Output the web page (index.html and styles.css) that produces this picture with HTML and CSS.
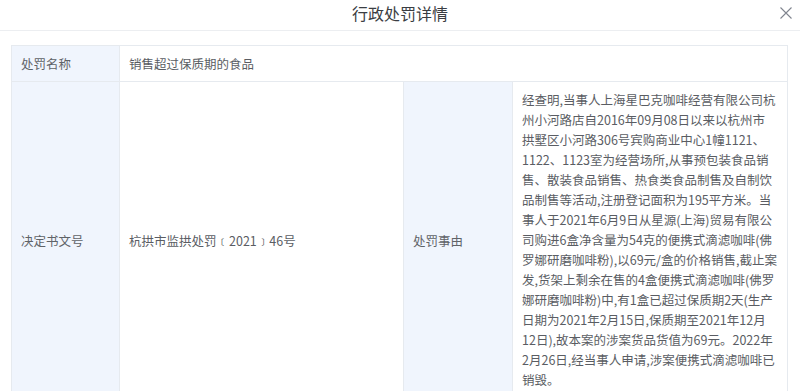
FILE: index.html
```html
<!DOCTYPE html>
<html lang="zh-CN">
<head>
<meta charset="utf-8">
<title>行政处罚详情</title>
<link rel="stylesheet" href="styles.css">
</head>
<body>
<div class="dialog">
  <div class="dialog-header">
    <span class="dialog-title">行政处罚详情</span>
    <span class="dialog-close" aria-label="关闭">
      <svg width="12" height="12" viewBox="0 0 12 12"><path d="M0.5 0.5L11.5 11.5M11.5 0.5L0.5 11.5" stroke="#80858f" stroke-width="1.1" fill="none"/></svg>
    </span>
  </div>
  <div class="dialog-body">
    <table class="detail">
      <colgroup>
        <col class="c-label"><col class="c-value"><col class="c-label2"><col class="c-value2">
      </colgroup>
      <tr class="row-short">
        <td class="label">处罚名称</td>
        <td class="value" colspan="3">销售超过保质期的食品</td>
      </tr>
      <tr>
        <td class="label">决定书文号</td>
        <td class="value">杭拱市监拱处罚﹝2021﹞46号</td>
        <td class="label">处罚事由</td>
        <td class="value long">经查明,当事人上海星巴克咖啡经营有限公司杭州小河路店自2016年09月08日以来以杭州市拱墅区小河路306号宾购商业中心1幢1121、1122、1123室为经营场所,从事预包装食品销售、散装食品销售、热食类食品制售及自制饮品制售等活动,注册登记面积为195平方米。当事人于2021年6月9日从星源(上海)贸易有限公司购进6盒净含量为54克的便携式滴滤咖啡(佛罗娜研磨咖啡粉),以69元/盒的价格销售,截止案发,货架上剩余在售的4盒便携式滴滤咖啡(佛罗娜研磨咖啡粉)中,有1盒已超过保质期2天(生产日期为2021年2月15日,保质期至2021年12月12日),故本案的涉案货品货值为69元。2022年2月26日,经当事人申请,涉案便携式滴滤咖啡已销毁。</td>
      </tr>
    </table>
  </div>
</div>
</body>
</html>
```

FILE: styles.css
```css
html, body {
  margin: 0;
  padding: 0;
  background: #ffffff;
}
body {
  font-family: "Noto Sans CJK SC", "Noto Sans", sans-serif;
  color: #606266;
}
.dialog {
  width: 800px;
}
.dialog-header {
  height: 30px;
  border-bottom: 1px solid #eceef1;
  display: flex;
  align-items: center;
  justify-content: center;
  position: relative;
}
.dialog-title {
  font-size: 16px;
  line-height: 20px;
  color: #3a3d42;
  margin-top: -5px;
}
.dialog-close {
  position: absolute;
  right: 8px;
  top: 7px;
  width: 12px;
  height: 12px;
  display: flex;
}
.dialog-body {
  padding: 14px 13px 0 11px;
}
.detail {
  width: 776px;
  border-collapse: collapse;
  table-layout: fixed;
  font-size: 12.5px;
  line-height: 20px;
}
.c-label { width: 108px; }
.c-value { width: 284px; }
.c-label2 { width: 109px; }
.c-value2 { width: 275px; }
.detail td {
  border: 1px solid #e6eaef;
  padding: 0 9px;
  vertical-align: middle;
}
.row-short td {
  height: 34px;
  padding-top: 1px;
}
.label {
  background: #f0f5fd;
  color: #5f6368;
}
.value {
  background: #ffffff;
  color: #5a5d63;
}
.value.long {
  padding: 8px 10px 10px 9px;
}
```
